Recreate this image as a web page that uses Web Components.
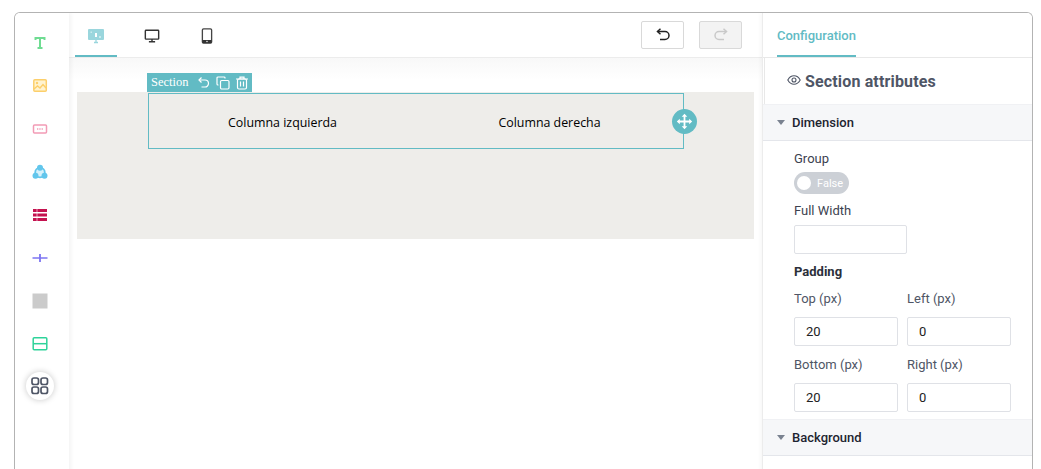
<!DOCTYPE html>
<html>
<head>
<meta charset="utf-8">
<title>Editor</title>
<style>
html, body { margin: 0; height: 469px; overflow: hidden; background: #fff; }
body { font-family: Roboto, "Liberation Sans", sans-serif; }
</style>
</head>
<body>
<editor-shell>
    <block-rail slot="rail"></block-rail>
    <canvas-toolbar slot="toolbar"></canvas-toolbar>
    <canvas-stage slot="stage"></canvas-stage>
    <config-panel slot="panel"></config-panel>
</editor-shell>

<script>
// Helper function.
function defineEl(name, css, html) {
    customElements.define(name, class extends HTMLElement {
        constructor() {
            super();
            this.attachShadow({ mode: 'open' }).innerHTML = `<style>${css}</style>${html}`;
        }
    });
}

// Outer frame with the rounded border.
defineEl('editor-shell', `
    :host { display: block; padding: 12px 8px 0 14px; height: 469px; box-sizing: border-box; }
    .frame {
        height: 470px; box-sizing: border-box;
        border: 1px solid #b3b3b3; border-bottom: 0; border-radius: 6px 6px 0 0;
        display: grid; grid-template-columns: 54px 693px 1fr; grid-template-rows: 45px 1fr;
        overflow: hidden;
    }
    .rail { grid-row: 1 / 3; }
    .toolbar { grid-column: 2; }
    .stage { grid-column: 2; }
    .panel { grid-column: 3; grid-row: 1 / 3; }
`, `
    <div class="frame">
        <div class="rail"><slot name="rail"></slot></div>
        <div class="toolbar"><slot name="toolbar"></slot></div>
        <div class="stage"><slot name="stage"></slot></div>
        <div class="panel"><slot name="panel"></slot></div>
    </div>
`);

// Left rail of draggable blocks.
defineEl('block-rail', `
    :host { display: block; height: 100%; background: #fff; box-shadow: 2px 0 4px rgba(0,0,0,.05); position: relative; }
    .list { display: flex; flex-direction: column; align-items: center; padding: 19px 0 0 0; gap: 21px; width: 50px; }
    svg { display: block; width: 22px; height: 22px; }
    .more { width: 28px; height: 28px; margin-top: -4px; border-radius: 50%; background: #fff; box-shadow: 0 0 6px rgba(0,0,0,.22); display: flex; align-items: center; justify-content: center; }
    .more svg { width: 18px; height: 18px; }
`, `
    <div class="list">
        <svg viewBox="0 0 22 22"><path d="M6.500 8V6h9v2M11 6v10M8.500 16h5" fill="none" stroke="#6fdc92" stroke-width="2"/></svg>
        <svg viewBox="0 0 22 22"><rect x="4.800" y="4.800" width="12.500" height="11.500" rx="1" fill="#fff3d0" stroke="#fccf6b" stroke-width="1.500"/><circle cx="8" cy="8" r="1.200" fill="#fccf6b"/><path d="M5 14l3.500-3 2.500 2 3-3.500 3 3.500" fill="none" stroke="#fccf6b" stroke-width="1.400"/></svg>
        <svg viewBox="0 0 22 22"><rect x="4.500" y="7" width="13" height="8" rx="1" fill="#fff" stroke="#f29bb5" stroke-width="1.500"/><path d="M8 11h6" stroke="#f29bb5" stroke-width="1.300" stroke-dasharray="1.300 1"/></svg>
        <svg viewBox="0 0 22 22"><circle cx="11" cy="11.500" r="4.800" fill="#d6f1fb" stroke="#62c6ec" stroke-width="1.800"/><circle cx="11" cy="6.800" r="3" fill="#62c6ec"/><circle cx="6.500" cy="14.800" r="3" fill="#62c6ec"/><circle cx="15.500" cy="14.800" r="3" fill="#62c6ec"/></svg>
        <svg viewBox="0 0 22 22"><path d="M4 5h14v3H4zM4 9.500h14v3H4zM4 14h14v3H4z" fill="#c4124f"/><path d="M8 5v12" stroke="#fff" stroke-width=".6"/></svg>
        <svg viewBox="0 0 22 22"><path d="M3.500 11h15" stroke="#7c74f2" stroke-width="1.500"/><path d="M11 7v8" stroke="#7c74f2" stroke-width="1.800"/></svg>
        <svg viewBox="0 0 22 22"><rect x="3.500" y="3.500" width="15" height="15" fill="#cbcbcb"/></svg>
        <svg viewBox="0 0 22 22"><rect x="4.200" y="4.700" width="13.600" height="12" rx="1" fill="none" stroke="#2ed39a" stroke-width="1.500"/><path d="M4 10.700h14" stroke="#2ed39a" stroke-width="1.500"/></svg>
        <div class="more"><svg viewBox="0 0 18 18" fill="none" stroke="#4f5666" stroke-width="1.700"><rect x="1" y="1" width="6.500" height="6.500" rx="2"/><rect x="10" y="1" width="6.500" height="6.500" rx="2"/><rect x="1" y="10" width="6.500" height="6.500" rx="2"/><rect x="10" y="10" width="6.500" height="6.500" rx="2"/></svg></div>
    </div>
`);

// Device tabs plus undo and redo.
defineEl('canvas-toolbar', `
    :host { display: flex; height: 45px; box-sizing: border-box; align-items: stretch; padding: 0 20px 0 6px; border-bottom: 1px solid #ececec; background: #fff; }
    .tabs { display: flex; flex: 1; }
    .tab { width: 42px; margin-right: 13px; display: flex; align-items: center; justify-content: center; box-sizing: border-box; padding: 2px 0 0 2px; }
    .tab.on { border-bottom: 2px solid #62bbc4; padding: 3px 0 0 0; }
    .tab svg { width: 16px; height: 16px; display: block; }
    .tab.on svg { width: 18px; height: 18px; }
    .btns { display: flex; gap: 15px; padding-top: 8px; }
    .btn { width: 43px; height: 28px; box-sizing: border-box; border: 1px solid #d9d9d9; border-radius: 2px; display: flex; align-items: center; justify-content: center; background: #fff; }
    .btn.off { background: #f3f3f3; }
    .btn svg { width: 16px; height: 16px; display: block; }
`, `
    <div class="tabs">
        <div class="tab on"><svg viewBox="0 0 18 18"><rect x="1" y="2" width="16" height="11" rx="1" fill="#9ad6dd"/><path d="M7 15.500h4M9 13v2.500" stroke="#9ad6dd" stroke-width="1.300"/><path d="M8 6h2v4H8z" fill="#fff"/><path d="M3.500 4.500h1.500v1.500H3.500zM12 9h2v2h-2z" fill="#c9ebee"/></svg></div>
        <div class="tab"><svg viewBox="0 0 18 18"><rect x="1.500" y="2.500" width="15" height="10" rx=".8" fill="none" stroke="#333" stroke-width="1.600"/><path d="M9 12.500v2.500M5.500 15.500h7" stroke="#333" stroke-width="1.600"/></svg></div>
        <div class="tab"><svg viewBox="0 0 18 18"><rect x="3.800" y="1" width="10.400" height="16" rx="1.300" fill="none" stroke="#444" stroke-width="1.500"/><rect x="4" y="13.500" width="10" height="3.500" fill="#333"/><circle cx="9" cy="15.200" r=".8" fill="#fff"/></svg></div>
    </div>
    <div class="btns">
        <div class="btn"><svg viewBox="0 0 16 16" fill="none" stroke="#222" stroke-width="1.500"><path d="M5.500 1.800L2.500 4.500l3 2.700"/><path d="M2.800 4.500H10a3.600 3.600 0 0 1 0 8H5"/></svg></div>
        <div class="btn off"><svg viewBox="0 0 16 16" fill="none" stroke="#c9c9c9" stroke-width="1.500"><path d="M10.500 1.800l3 2.700-3 2.700"/><path d="M13.200 4.500H6a3.600 3.600 0 0 0 0 8h5"/></svg></div>
    </div>
`);

// Canvas with the selected section.
defineEl('canvas-stage', `
    :host { display: block; height: 100%; background: linear-gradient(#f8f8f8, #fff 22px); padding: 34px 8px 0 8px; box-sizing: border-box; }
    .section { height: 147px; background: #eeedea; position: relative; padding: 1px 70px 0 71px; box-sizing: border-box; }
    .row { display: grid; grid-template-columns: 1fr 1fr; height: 56px; box-sizing: border-box; border: 1px solid #62bbc4; position: relative; }
    .col { display: flex; align-items: center; justify-content: center; font: 12.400px "Open Sans", "DejaVu Sans", sans-serif; color: #000; padding-top: 2px; }
    .tools { position: absolute; left: -2px; top: -21px; height: 19px; width: 105px; background: #62bbc4; color: #fff; display: flex; align-items: center; gap: 5px; padding-left: 4px; box-sizing: border-box; font: 12.500px "Liberation Serif", serif; }
    .tools span { margin-right: 3px; }
    .tools svg { width: 14px; height: 14px; display: block; }
    .move { position: absolute; right: -14px; top: 15px; width: 25px; height: 25px; border-radius: 50%; background: #62bbc4; display: flex; align-items: center; justify-content: center; }
    .move svg { width: 17px; height: 17px; display: block; }
`, `
    <div class="section">
        <div class="row">
            <div class="tools">
                <span>Section</span>
                <svg viewBox="0 0 14 14" fill="none" stroke="#fff" stroke-width="1.200"><path d="M4.500 1.500L2 4l2.500 2.500"/><path d="M2.200 4H8a3.300 3.300 0 0 1 0 7H4.500"/></svg>
                <svg viewBox="0 0 14 14" fill="none" stroke="#fff" stroke-width="1.200"><path d="M9 2.500V2a1 1 0 0 0-1-1H2a1 1 0 0 0-1 1v6a1 1 0 0 0 1 1h.500"/><rect x="4.500" y="4.500" width="8.500" height="8.500" rx="1.200"/></svg>
                <svg viewBox="0 0 14 14" fill="none" stroke="#fff" stroke-width="1.200"><path d="M1 3h12M5 3V1.200h4V3"/><rect x="2.500" y="3" width="9" height="10" rx="1.500"/><path d="M5.500 5.500v5M8.500 5.500v5"/></svg>
            </div>
            <div class="col">Columna izquierda</div>
            <div class="col">Columna derecha</div>
            <div class="move"><svg viewBox="0 0 17 17"><path d="M8.500 3v11M3 8.500h11" stroke="#fff" stroke-width="1.800"/><path d="M8.500 .8l2.800 3H5.700zM8.500 16.200l2.800-3H5.700zM.8 8.500l3-2.800v5.600zM16.200 8.500l-3-2.800v5.600z" fill="#fff"/></svg></div>
        </div>
    </div>
`);

// Single label and input.
defineEl('num-field', `
    :host { display: block; }
    label { display: block; font-size: 13px; line-height: 15px; color: #4f5666; margin-bottom: 11px; }
    .box { height: 29px; box-sizing: border-box; border: 1px solid #dfe1e6; border-radius: 2px; font-size: 13px; color: #222; padding: 0 11px; line-height: 28px; background: #fff; }
`, `<label><slot name="label"></slot></label><div class="box"><slot></slot></div>`);

// Collapsible panel heading.
defineEl('panel-head', `
    :host { display: flex; align-items: center; height: 37px; box-sizing: border-box; background: #f6f7f9; border-top: 1px solid #f0f1f4; border-bottom: 1px solid #e4e6eb; padding-left: 14px; font-size: 13px; font-weight: 500; color: #1d2430; }
    i { width: 0; height: 0; border-left: 4px solid transparent; border-right: 4px solid transparent; border-top: 5px solid #7a8290; margin-right: 7px; }
`, `<i></i><slot></slot>`);

// Right configuration panel.
defineEl('config-panel', `
    :host { display: block; height: 100%; background: #fff; border-left: 1px solid #ececec; box-sizing: border-box; font-size: 13px; box-shadow: -2px 0 4px rgba(0,0,0,.03); }
    .tabs { height: 45px; border-bottom: 1px solid #e8e8e8; box-sizing: border-box; padding: 0 14px; }
    .tab { display: inline-block; height: 44px; box-sizing: border-box; line-height: 45px; font-size: 13px; font-weight: 500; color: #62bbc4; border-bottom: 2px solid #62bbc4; }
    .title { height: 46px; box-sizing: border-box; padding: 14px 0 0 22px; font-size: 16px; font-weight: 700; line-height: 20px; letter-spacing: .15px; color: #4f5666; display: flex; gap: 4px; border-left: 1px solid #e8e8e8; margin-left: 1px; }
    .title svg { width: 14px; height: 14px; margin-top: 1px; }
    .dim { padding: 10px 21px 0 31px; color: #4f5666; }
    .lab { line-height: 15px; color: #3c4250; }
    .sw { width: 55px; height: 22px; margin: 6px 0 9px; border-radius: 11px; background: #ccd0d6; display: flex; align-items: center; color: #fff; font-size: 11px; gap: 6px; padding-left: 3px; box-sizing: border-box; }
    .sw i { width: 14px; height: 14px; border-radius: 50%; background: #fff; }
    .wide { width: 113px; height: 29px; box-sizing: border-box; border: 1px solid #dfe1e6; border-radius: 2px; margin-top: 7px; }
    .pad { font-weight: 700; color: #2b303a; margin-top: 10px; line-height: 15px; font-size: 13px; }
    .grid { display: grid; grid-template-columns: 104px 104px; column-gap: 9px; row-gap: 11px; margin-top: 12px; }
    .foot { margin-top: 7px; }
`, `
    <div class="tabs"><div class="tab">Configuration</div></div>
    <div class="title"><svg viewBox="0 0 14 14" fill="none" stroke="#4f5666" stroke-width="1.100"><path d="M.8 7C2.400 4 4.500 2.800 7 2.800S11.600 4 13.200 7c-1.600 3-3.700 4.200-6.200 4.200S2.400 10 .8 7z"/><circle cx="7" cy="7" r="2"/></svg>Section attributes</div>
    <panel-head>Dimension</panel-head>
    <div class="dim">
        <div class="lab">Group</div>
        <div class="sw"><i></i>False</div>
        <div class="lab">Full Width</div>
        <div class="wide"></div>
        <div class="pad">Padding</div>
        <div class="grid">
            <num-field><span slot="label">Top (px)</span>20</num-field>
            <num-field><span slot="label">Left (px)</span>0</num-field>
            <num-field><span slot="label">Bottom (px)</span>20</num-field>
            <num-field><span slot="label">Right (px)</span>0</num-field>
        </div>
    </div>
    <panel-head class="foot">Background</panel-head>
`);
</script>
</body>
</html>
